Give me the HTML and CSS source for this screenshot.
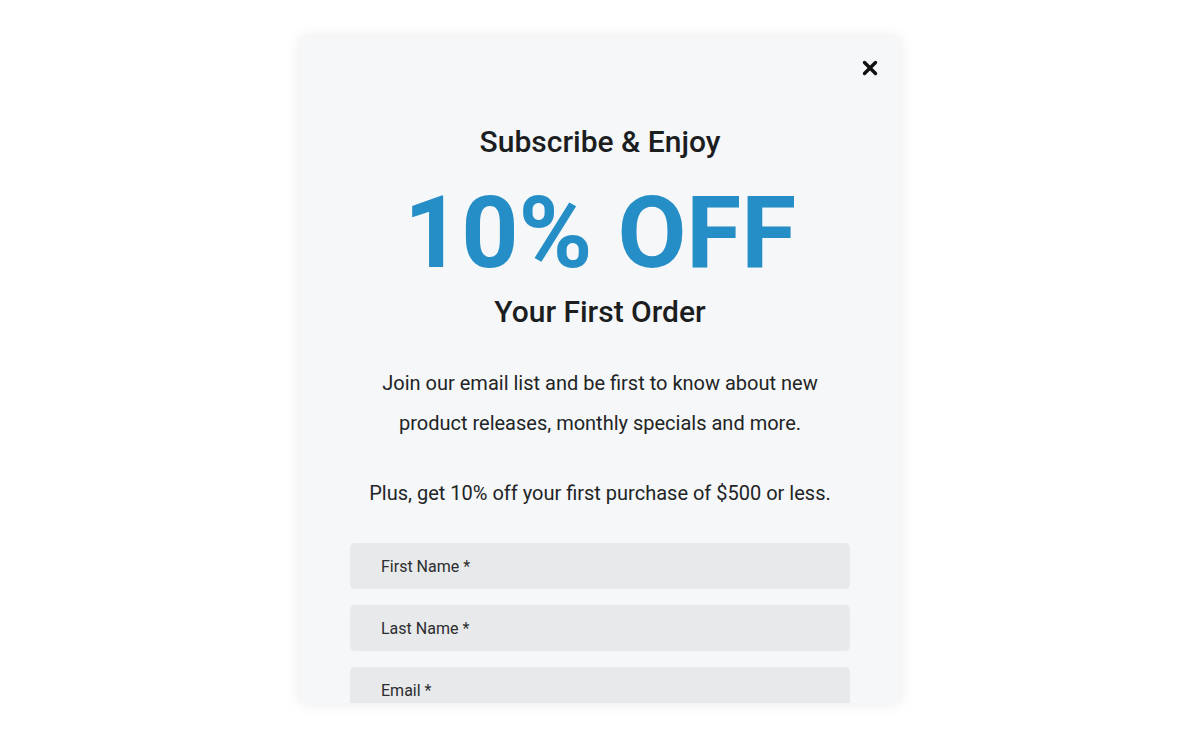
FILE: index.html
```html
<!DOCTYPE html>
<html>
<head>
<meta charset="utf-8">
<link rel="stylesheet" href="styles.css">
</head>
<body>
<div class="stage">
  <div class="modal">
    <button class="close" aria-label="Close">
      <svg width="16" height="16" viewBox="0 0 16 16"><path d="M2.5 2.5 L13.5 13.5 M13.5 2.5 L2.5 13.5" stroke="#111" stroke-width="3.4" stroke-linecap="round"/></svg>
    </button>
    <div class="content">
      <h2 class="title">Subscribe &amp; Enjoy</h2>
      <div class="offer">10% OFF</div>
      <h2 class="subtitle">Your First Order</h2>
      <p class="desc">Join our email list and be first to know about new product releases, monthly specials and more.</p>
      <p class="desc plus">Plus, get 10% off your first purchase of $500 or less.</p>
      <form class="form">
        <div class="field">First Name *</div>
        <div class="field">Last Name *</div>
        <div class="field">Email *</div>
      </form>
    </div>
  </div>
</div>
</body>
</html>
```

FILE: styles.css
```css
html, body {
  margin: 0;
  padding: 0;
  background: #ffffff;
  font-family: Roboto, "Noto Sans", sans-serif;
}
.stage {
  height: 740px;
  display: flex;
  align-items: center;
  justify-content: center;
}
.modal {
  position: relative;
  width: 600px;
  height: 666px;
  background: #f5f7f8;
  box-shadow: 0 0 14px rgba(0, 0, 0, 0.09);
  overflow: hidden;
}
.close {
  position: absolute;
  top: 23px;
  right: 22px;
  width: 16px;
  height: 16px;
  padding: 0;
  border: 0;
  background: none;
  cursor: pointer;
}
.close svg { display: block; }
.content {
  padding: 87px 50px 0;
  display: flex;
  flex-direction: column;
  align-items: center;
  text-align: center;
}
.title, .subtitle {
  margin: 0;
  font-size: 30px;
  line-height: 36px;
  font-weight: 500;
  color: #1b1d1f;
}
.offer {
  margin-top: 23px;
  font-size: 100px;
  line-height: 100px;
  font-weight: 700;
  color: #268ec7;
}
.subtitle { margin-top: 11px; }
.desc {
  margin: 33px 0 0;
  max-width: 460px;
  font-size: 20px;
  line-height: 40px;
  color: #222426;
}
.plus { margin-top: 30px; max-width: none; }
.form {
  margin-top: 30px;
  width: 100%;
  display: flex;
  flex-direction: column;
  gap: 16px;
}
.field {
  height: 46px;
  box-sizing: border-box;
  padding: 0 31px;
  display: flex;
  align-items: center;
  background: #e8e9ea;
  border-radius: 5px;
  font-size: 16px;
  color: #2b2d2f;
  text-align: left;
}
```
